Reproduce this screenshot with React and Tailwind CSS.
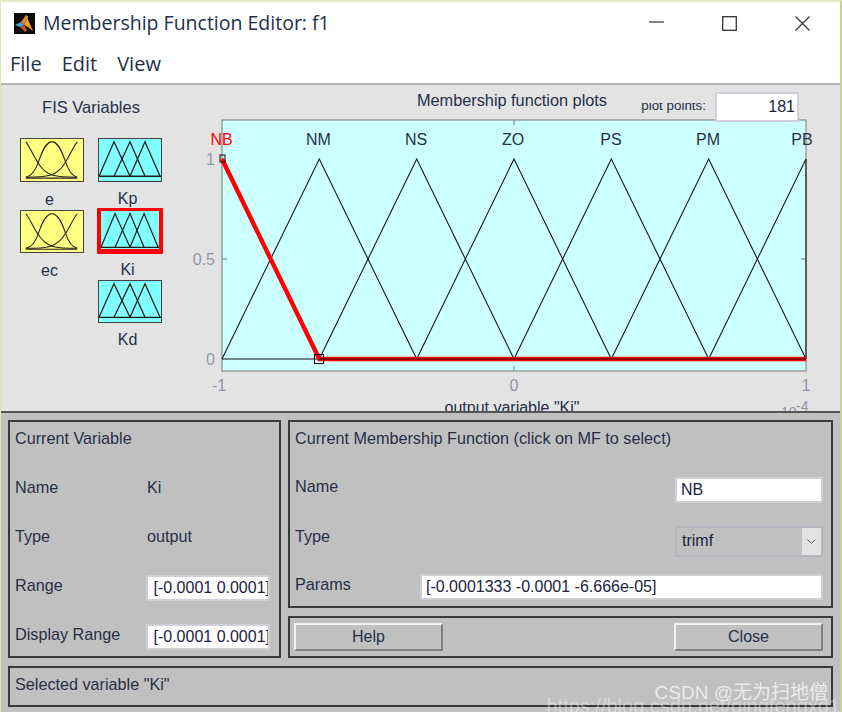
import { ChevronDown } from 'lucide-react';

const sans = 'font-["Liberation_Sans",Arial,sans-serif]';

function MatlabIcon() {
  return (
    <svg width="21" height="21" viewBox="0 0 21 21" className="shrink-0 -mt-[3px]">
      <rect width="21" height="21" fill="#0b0b0b" />
      <path d="M1 12 L7 9 L10 12 L6 14 Z" fill="#3fa7d6" />
      <path d="M7 9 L12 2 L14 4 L10 12 Z" fill="#e8862a" />
      <path d="M12 2 L19 18 L14 14 L10 12 L14 4 Z" fill="#f0a030" />
      <path d="M6 14 L10 12 L13 17 L11 19 Z" fill="#c8521c" />
    </svg>
  );
}

function GaussIcon() {
  return (
    <svg viewBox="0 0 64 44" preserveAspectRatio="none" className="w-full h-full block" fill="none" stroke="#222" strokeWidth="1.1">
      <path d="M5 3 C10 10 13 18 17 24 C21 31 26 36 33 38 C40 40 50 40 58 40" />
      <path d="M5 40 C11 39 15 33 18 24 C22 12 26 3 32 3 C38 3 42 12 46 24 C49 33 53 39 58 40" />
      <path d="M58 3 C53 10 50 18 46 24 C42 31 37 36 30 38 C23 40 13 40 5 40" />
      <path d="M5 41 L58 41" />
    </svg>
  );
}

function TriIcon({ strip = true }) {
  const base = strip ? 39 : 42;
  return (
    <svg viewBox="0 0 64 44" preserveAspectRatio="none" className="w-full h-full block" fill="none" stroke="#1c1c1c" strokeWidth="1.3">
      <path d={`M0 ${base} L15.5 3 L32 ${base}`} />
      <path d={`M15.5 ${base} L32 3 L47.5 ${base}`} />
      <path d={`M32 ${base} L47.5 3 L63 ${base}`} />
      <path d={`M0 ${base} L64 ${base}`} strokeWidth="1.4" />
    </svg>
  );
}

function Variable({ label, gauss, selected, cell = 'h-[71px]', boxH = 'h-[44px]', labelMt = 'mt-[9px]' }) {
  return (
    <div className={`${cell} flex flex-col items-center`}>
      {selected ? (
        <div className="w-[66px] h-[46px] -mt-[1px] border-x-4 border-t-[3px] border-b-[5px] border-[#ff0000] bg-[#80ffff] rounded-[1px] shrink-0">
          <TriIcon strip={false} />
        </div>
      ) : (
        <div className={`w-[64px] ${boxH} border border-[#444] shrink-0 ${gauss ? 'bg-[#ffff80]' : 'bg-[#80ffff]'}`}>
          {gauss ? <GaussIcon /> : <TriIcon />}
        </div>
      )}
      <div className={`text-[16px] leading-[18px] text-[#26304a] pr-[5px] ${labelMt}`}>{label}</div>
    </div>
  );
}

function Plot() {
  const peaks = [222, 319.3, 416.7, 514, 611.3, 708.7, 806];
  const names = [
    ['NB', 221.5],
    ['NM', 318.5],
    ['NS', 416],
    ['ZO', 513],
    ['PS', 611],
    ['PM', 708],
    ['PB', 802],
  ];
  return (
    <svg width="650" height="326" viewBox="190 85 650 326" className="block" fontFamily="'Liberation Sans', Arial, sans-serif">
      <rect x="222" y="120" width="584" height="251" fill="#ccffff" stroke="#8a8a8a" strokeWidth="1.2" />
      <path d="M514 120v5M514 371v-5M222 259h5M806 259h-5" stroke="#777" />
      <text x="512" y="106" textAnchor="middle" fontSize="16.3" fill="#26304a">Membership function plots</text>

      {peaks.slice(1).map((p, i) => {
        const next = peaks[i + 2] ?? p;
        return (
          <path key={p} d={`M${peaks[i]} 359 L${p} 159 L${next} 359`} fill="none" stroke="#1a1a1a" strokeWidth="1.1" />
        );
      })}
      <path d="M222 359 H319.3" stroke="#111" strokeWidth="1.1" />
      <path d="M222 159 L319.3 359 H806" fill="none" stroke="#ff0000" strokeWidth="4.4" />
      <path d="M319.3 359 H806" stroke="#200" strokeWidth="1.2" />
      <rect x="220" y="155" width="5" height="7" fill="none" stroke="#111" />
      <rect x="314.5" y="354.5" width="9" height="9" fill="none" stroke="#111" />

      {names.map(([n, x], i) => (
        <text key={n} x={x} y="145" textAnchor="middle" fontSize="16" fill={i === 0 ? '#ff0000' : '#26304a'}>{n}</text>
      ))}
      <g fontSize="16" fill="#8f96a3">
        <text x="215" y="165" textAnchor="end">1</text>
        <text x="215" y="265" textAnchor="end">0.5</text>
        <text x="215" y="365" textAnchor="end">0</text>
        <text x="219" y="391" textAnchor="middle">-1</text>
        <text x="514" y="391" textAnchor="middle">0</text>
        <text x="806" y="391" textAnchor="middle">1</text>
        <text x="781" y="417" fontSize="14">10</text>
        <text x="796" y="411" fontSize="14">-4</text>
      </g>
      <text x="512" y="413" textAnchor="middle" fontSize="16" fill="#26304a">output variable "Ki"</text>
    </svg>
  );
}

function Field({ value, className = '' }) {
  return (
    <div className={`bg-white border-2 border-[#cfcfd6] h-[26px] flex items-center overflow-hidden whitespace-nowrap text-[16px] text-[#1c2340] ${className}`}>
      {value}
    </div>
  );
}

function Label({ children, className = '' }) {
  return <div className={`text-[16.2px] leading-[18px] text-[#2a2f45] ${className}`}>{children}</div>;
}

function Button({ children }) {
  return (
    <div className="w-[149px] h-[28px] flex items-center justify-center bg-[#c0c0c0] border-2 border-t-[#f2f2f2] border-l-[#f2f2f2] border-b-[#808080] border-r-[#808080] text-[16px] text-[#26304a]">
      {children}
    </div>
  );
}

function Row({ children, className = '' }) {
  return <div className={`flex items-center shrink-0 ${className}`}>{children}</div>;
}

export default function App() {
  return (
    <div className={`relative w-[842px] h-[712px] overflow-hidden flex flex-col bg-white border-t-2 border-t-[#e4ecc4] border-l border-l-[#dfe4b8] border-r-2 border-r-[#c9d68a] ${sans}`}>
      {/* title bar */}
      <div className="h-[46px] flex items-center pl-[13px] shrink-0 font-['Open_Sans',sans-serif]">
        <MatlabIcon />
        <div className="ml-[8px] -mt-[4px] text-[19.5px] text-[#1f2f4a]">Membership Function Editor: f1</div>
        <div className="ml-auto mr-[30px] -mt-[3px] flex items-center gap-[58px]">
          <svg width="15" height="15" viewBox="0 0 15 15" stroke="#333" strokeWidth="1.2"><path d="M0 6h15" /></svg>
          <svg width="15" height="15" viewBox="0 0 15 15" fill="none" stroke="#333" strokeWidth="1.3"><rect x="0.7" y="0.7" width="13.6" height="13.6" /></svg>
          <svg width="15" height="15" viewBox="0 0 15 15" stroke="#333" strokeWidth="1.2"><path d="M0.5 0.5L14.5 14.5M14.5 0.5L0.5 14.5" /></svg>
        </div>
      </div>
      <div className="h-[37px] flex items-center gap-[20px] pl-[9px] pb-[3px] shrink-0 border-b-2 border-b-[#b4b4b4] font-['Open_Sans',sans-serif] text-[20px] text-[#1f2f4a]">
        <span>File</span>
        <span>Edit</span>
        <span>View</span>
      </div>

      {/* plots */}
      <div className="relative h-[328px] shrink-0 flex bg-[#e3e3e3] border-b-2 border-b-[#555]">
        <div className="w-[189px] shrink-0 pl-[19px]">
          <div className="w-[142px] pt-[13px] h-[53px] text-center text-[16.5px] leading-[18px] text-[#26304a]">FIS Variables</div>
          <div className="flex gap-[14px]">
            <div className="w-[64px]">
              <Variable label="e" gauss cell="h-[72px]" />
              <Variable label="ec" gauss boxH="h-[43px]" />
            </div>
            <div className="w-[64px]">
              <Variable label="Kp" labelMt="mt-[8px]" />
              <Variable label="Ki" selected labelMt="mt-[7px]" />
              <Variable label="Kd" boxH="h-[43px]" labelMt="mt-[8px]" />
            </div>
          </div>
        </div>
        <Plot />
        <div className="absolute right-[41px] top-[7px] flex items-center">
          <div className="h-[11px] overflow-hidden mr-[9px] text-[13.4px] leading-[14px] text-[#26304a] mt-[3px]"><div className="-mt-[4px]">plot points:</div></div>
          <div className="w-[84px] h-[30px] bg-white border-2 border-[#d0d0d8] flex items-center justify-end pr-[2px] text-[16px] text-[#1c2340]">181</div>
        </div>
      </div>

      {/* editors */}
      <div className="flex-1 bg-[#c0c0c0] px-[7px] pt-[7px] flex flex-col gap-[8px]">
        <div className="flex gap-[7px] h-[238px] shrink-0">
          <div className="w-[273px] shrink-0 border-2 border-[#3a3a3a] pl-[5px] pr-[9px] pt-[7px]">
            <Label className="h-[34px]">Current Variable</Label>
            <Row className="h-[49px]"><Label className="w-[132px] -mt-[2px]">Name</Label><Label className="-mt-[2px]">Ki</Label></Row>
            <Row className="h-[50px]"><Label className="w-[132px] -mt-[2px]">Type</Label><Label className="-mt-[2px]">output</Label></Row>
            <Row className="h-[49px]"><Label className="w-[132px] -mt-[4px]">Range</Label><Field value="[-0.0001 0.0001]" className="w-[124px] pl-[5px] mt-[3px]" /></Row>
            <Row className="h-[49px]"><Label className="w-[132px] -mt-[4px]">Display Range</Label><Field value="[-0.0001 0.0001]" className="w-[124px] pl-[5px] mt-[3px]" /></Row>
          </div>
          <div className="w-[545px] shrink-0 flex flex-col gap-[8px]">
            <div className="h-[188px] shrink-0 border-2 border-[#3a3a3a] pl-[5px] pr-[8px] pt-[7px]">
              <Label className="h-[36px]">Current Membership Function (click on MF to select)</Label>
              <Row className="h-[49px] justify-between"><Label className="-mt-[7px]">Name</Label><Field value="NB" className="w-[148px] pl-[4px]" /></Row>
              <Row className="h-[54px] justify-between">
                <Label className="-mt-[10px]">Type</Label>
                <div className="w-[148px] h-[31px] border-2 border-[#b4b4bc] flex items-center pl-[5px] text-[16px] text-[#1c2340]">
                  trimf
                  <div className="ml-auto w-[19px] h-full bg-[#e3e3e3] flex items-center justify-center">
                    <ChevronDown size={15} strokeWidth={1.5} color="#555" />
                  </div>
                </div>
              </Row>
              <Row className="h-[38px] justify-between"><Label className="-mt-[6px]">Params</Label><Field value="[-0.0001333 -0.0001 -6.666e-05]" className="w-[403px] pl-[4px]" /></Row>
            </div>
            <div className="h-[42px] shrink-0 border-2 border-[#3a3a3a] pl-[4px] pr-[8px] flex items-center justify-between">
              <Button>Help</Button>
              <Button>Close</Button>
            </div>
          </div>
        </div>
        <div className="h-[41px] shrink-0 w-[825px] border-2 border-[#3a3a3a] pl-[5px] flex items-center">
          <Label className="-mt-[5px]">Selected variable "Ki"</Label>
        </div>
      </div>

      {/* watermark */}
      <div className="absolute right-[12px] bottom-[7px] text-[19px] leading-[24px] text-white/70 whitespace-nowrap font-['Liberation_Sans','Noto_Sans_CJK_SC',sans-serif]">CSDN @无为扫地僧</div>
      <div className="absolute right-[0px] bottom-[-5px] text-[20px] leading-[22px] text-white/40 whitespace-nowrap">https://blog.csdn.net/qingfengxd1</div>
    </div>
  );
}
